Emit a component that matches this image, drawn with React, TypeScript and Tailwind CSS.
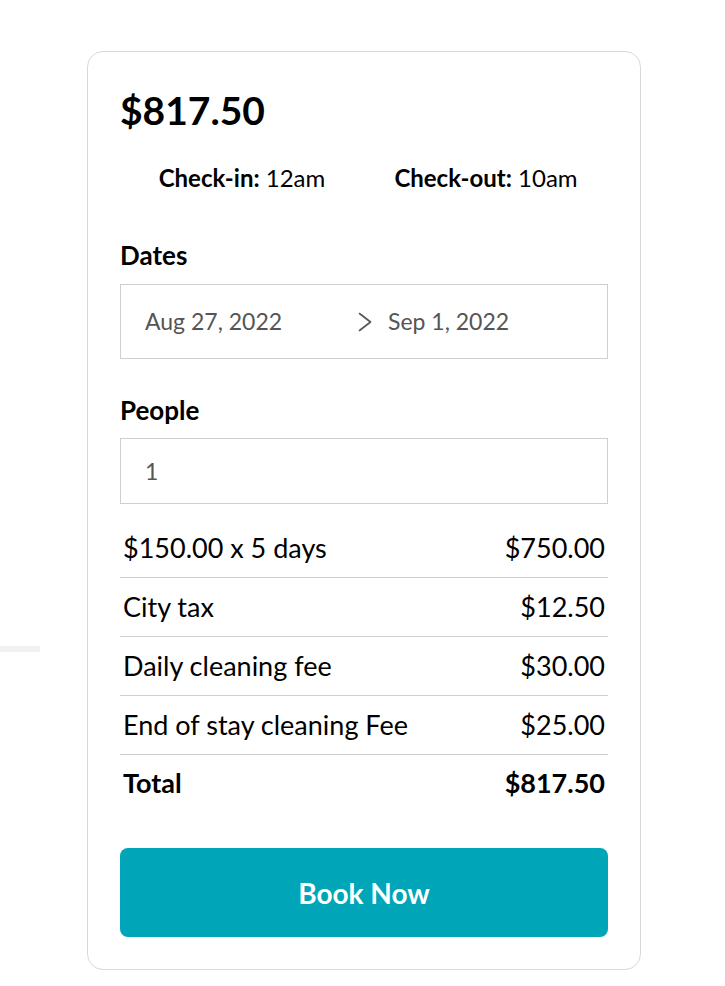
const rows = [
  { label: '$150.00 x 5 days', amount: '$750.00' },
  { label: 'City tax', amount: '$12.50' },
  { label: 'Daily cleaning fee', amount: '$30.00' },
  { label: 'End of stay cleaning Fee', amount: '$25.00' },
]

function Chevron() {
  return (
    <svg width="14" height="20" viewBox="0 0 14 20" fill="none" className="shrink-0">
      <polyline
        points="1.5,1.5 12.5,10 1.5,18.5"
        stroke="#555"
        strokeWidth="1.6"
        strokeLinecap="round"
        strokeLinejoin="round"
      />
    </svg>
  )
}

export default function App() {
  return (
    <div
      className="min-h-[986px] bg-white flex pt-[51px] text-black"
      style={{ fontFamily: 'Lato, "Noto Sans", sans-serif' }}
    >
      {/* fragment of a neighbouring block */}
      <div className="w-[87px] shrink-0">
        <div className="w-[40px] h-[6px] bg-[#f1f1f1] mt-[595px]" />
      </div>

      <div className="w-[554px] h-[919px] border border-[#d9d9d9] rounded-2xl px-8 pt-[36px] pb-8 flex flex-col">
        <div className="text-[39px] font-bold leading-[44px]">$817.50</div>

        <div className="grid grid-cols-2 mt-[32px] text-[24px] leading-[28px]">
          <div className="text-center">
            <span className="font-bold">Check-in:</span> 12am
          </div>
          <div className="text-center">
            <span className="font-bold">Check-out:</span> 10am
          </div>
        </div>

        <div className="mt-[48px] text-[26px] font-bold leading-[30px]">Dates</div>
        <div className="mt-[14px] h-[75px] border border-[#cfcfcf] flex items-center pl-6 text-[23px] text-[#555]">
          <span className="w-[213px] shrink-0">Aug 27, 2022</span>
          <Chevron />
          <span className="ml-[16px]">Sep 1, 2022</span>
        </div>

        <div className="mt-[36px] text-[26px] font-bold leading-[30px]">People</div>
        <div className="mt-[13px] h-[66px] border border-[#cfcfcf] flex items-center pl-[24px] text-[23px] text-[#555]">
          1
        </div>

        <div className="mt-[15px]">
          {rows.map((r) => (
            <div
              key={r.label}
              className="h-[59px] border-b border-[#cfcfcf] flex items-center justify-between px-[3px] text-[27px]"
            >
              <span>{r.label}</span>
              <span>{r.amount}</span>
            </div>
          ))}
          <div className="h-[56px] flex items-center justify-between px-[3px] text-[27px] font-bold">
            <span>Total</span>
            <span>$817.50</span>
          </div>
        </div>

        <button className="mt-auto h-[89px] w-full rounded-lg bg-[#00a5b8] text-white text-[28px] font-bold">
          Book Now
        </button>
      </div>
    </div>
  )
}
